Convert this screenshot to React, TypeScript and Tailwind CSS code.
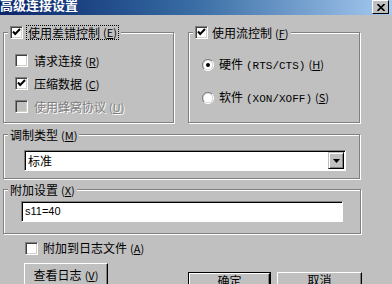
import React from "react";

const FONT = { fontFamily: '"Noto Sans CJK SC", "Liberation Sans", sans-serif' };

function Key({ k }: { k: string }) {
  return (
    <span className="ml-[3px] text-[11px]">
      (<span className="underline">{k}</span>)
    </span>
  );
}

function CheckBox({ checked, disabled }: { checked?: boolean; disabled?: boolean }) {
  return (
    <span
      className={`relative inline-block h-[13px] w-[13px] shrink-0 border border-t-[#808080] border-l-[#808080] border-r-white border-b-white shadow-[inset_1px_1px_0_#404040,inset_-1px_-1px_0_#d4d0c8] ${
        disabled ? "bg-[#c0c0c0]" : "bg-white"
      }`}
    >
      {checked && (
        <svg viewBox="0 0 11 11" className="absolute left-0 top-0 h-[11px] w-[11px]">
          <path d="M2 4.5 L4.2 7 L9 2" fill="none" stroke="#000" strokeWidth="2" />
        </svg>
      )}
    </span>
  );
}

function Radio({ checked }: { checked?: boolean }) {
  return (
    <svg viewBox="0 0 12 12" className="h-[12px] w-[12px] shrink-0">
      <path d="M10 2 A5.5 5.5 0 0 0 2 10" fill="none" stroke="#808080" />
      <path d="M10 2 A5.5 5.5 0 0 1 2 10" fill="none" stroke="#fff" />
      <circle cx="6" cy="6" r="4.5" fill="#fff" />
      {checked && <circle cx="6" cy="6" r="2" fill="#000" />}
    </svg>
  );
}

function Group({
  legend,
  className,
  children,
}: {
  legend: React.ReactNode;
  className: string;
  children?: React.ReactNode;
}) {
  return (
    <div
      className={`relative border border-[#808080] shadow-[inset_1px_1px_0_#fff,1px_1px_0_#fff] ${className}`}
    >
      <div className="absolute -top-[8px] left-[4px] flex h-[15px] items-center bg-[#c0c0c0] px-[2px]">
        {legend}
      </div>
      {children}
    </div>
  );
}

function Btn({
  children,
  className,
  def,
  top,
}: {
  children: React.ReactNode;
  className: string;
  def?: boolean;
  top?: boolean;
}) {
  return (
    <div className={`${def ? "border border-black" : ""} ${className}`}>
      <div
        className={`flex h-full w-full justify-center border border-t-white border-l-white border-r-black border-b-black shadow-[inset_-1px_-1px_0_#808080] text-[12px] ${
          top ? "items-start leading-[14px]" : "items-center"
        }`}
      >
        {children}
      </div>
    </div>
  );
}

export default function App() {
  return (
    <div
      className="h-[284px] w-[392px] overflow-hidden bg-[#c0c0c0] text-black"
      style={FONT}
    >
      {/* title bar */}
      <div className="flex h-[15px] items-start justify-between overflow-hidden bg-gradient-to-r from-[#0a246a] via-[#3a6ea5] to-[#a6caf0]">
        <span className="-mt-[4px] text-[13px] font-bold leading-[17px] text-white">高级连接设置</span>
        <div className="mr-[3px] flex h-[14px] w-[17px] items-center justify-center border border-t-white border-l-white border-r-black border-b-black bg-[#c0c0c0]">
          <svg viewBox="0 0 8 7" className="h-[7px] w-[8px]">
            <path d="M0.5 0 L7.5 7 M7.5 0 L0.5 7" stroke="#000" strokeWidth="1.6" />
          </svg>
        </div>
      </div>

      {/* top groups */}
      <div className="mt-[17px] flex pl-[3px]">
        <Group
          className="h-[91px] w-[171px]"
          legend={
            <div className="flex items-center gap-[3px]">
              <CheckBox checked />
              <span className="flex h-[15px] items-center border border-dotted border-black px-[1px] text-[12px]">
                使用差错控制
                <Key k="E" />
              </span>
            </div>
          }
        >
          <div className="flex flex-col pl-[11px] pt-[16px] text-[12px]">
            <div className="flex h-[23px] items-center gap-[6px]">
              <CheckBox />
              <span>
                请求连接
                <Key k="R" />
              </span>
            </div>
            <div className="flex h-[23px] items-center gap-[6px]">
              <CheckBox checked />
              <span>
                压缩数据
                <Key k="C" />
              </span>
            </div>
            <div className="flex h-[23px] items-center gap-[6px]">
              <CheckBox disabled />
              <span className="text-[#808080] [text-shadow:1px_1px_0_#fff]">
                使用蜂窝协议
                <Key k="U" />
              </span>
            </div>
          </div>
        </Group>

        <Group
          className="ml-[14px] h-[91px] w-[172px]"
          legend={
            <div className="flex items-center gap-[4px]">
              <CheckBox checked />
              <span className="text-[12px]">
                使用流控制
                <Key k="F" />
              </span>
            </div>
          }
        >
          <div className="flex flex-col gap-[10px] pl-[13px] pt-[20px] text-[12px]">
            <div className="flex h-[23px] items-center gap-[5px]">
              <Radio checked />
              <span>
                硬件
                <span className="ml-[3px] text-[11px]" style={{ fontFamily: '"Liberation Mono", monospace' }}>
                  (RTS/CTS)
                </span>
                <Key k="H" />
              </span>
            </div>
            <div className="flex h-[23px] items-center gap-[5px]">
              <Radio />
              <span>
                软件
                <span className="ml-[3px] text-[11px]" style={{ fontFamily: '"Liberation Mono", monospace' }}>
                  (XON/XOFF)
                </span>
                <Key k="S" />
              </span>
            </div>
          </div>
        </Group>
      </div>

      {/* modulation */}
      <div className="mt-[11px] pl-[3px]">
        <Group
          className="h-[45px] w-[357px]"
          legend={
            <span className="text-[12px]">
              调制类型
              <Key k="M" />
            </span>
          }
        >
          <div className="pl-[20px] pt-[15px]">
            <div className="flex h-[21px] w-[322px] items-center border border-t-[#808080] border-l-[#808080] border-r-white border-b-white bg-white shadow-[inset_1px_1px_0_#000]">
              <span className="flex-1 pl-[3px] text-[12px]">标准</span>
              <div className="mr-[1px] flex h-[17px] w-[16px] items-center justify-center border border-t-[#c0c0c0] border-l-[#c0c0c0] border-r-black border-b-black bg-[#c0c0c0] shadow-[inset_1px_1px_0_#fff,inset_-1px_-1px_0_#808080]">
                <svg viewBox="0 0 7 4" className="h-[4px] w-[7px]">
                  <path d="M0 0 H7 L3.5 4 Z" fill="#000" />
                </svg>
              </div>
            </div>
          </div>
        </Group>
      </div>

      {/* extra settings */}
      <div className="mt-[10px] pl-[3px]">
        <Group
          className="h-[45px] w-[358px]"
          legend={
            <span className="text-[12px]">
              附加设置
              <Key k="X" />
            </span>
          }
        >
          <div className="pl-[17px] pt-[11px]">
            <div className="flex h-[21px] w-[322px] items-center border border-t-[#808080] border-l-[#808080] border-r-white border-b-white bg-white shadow-[inset_1px_1px_0_#000]">
              <span className="pl-[3px] text-[11px]" style={{ fontFamily: '"Liberation Sans", sans-serif' }}>
                s11=40
              </span>
            </div>
          </div>
        </Group>
      </div>

      {/* log checkbox */}
      <div className="mt-[5px] flex items-center gap-[5px] pl-[25px] text-[12px]">
        <CheckBox />
        <span>
          附加到日志文件
          <Key k="A" />
        </span>
      </div>

      {/* buttons */}
      <div className="mt-[6px] flex items-start pl-[24px]">
        <Btn className="h-[24px] w-[84px]">
          <span>
            查看日志
            <Key k="V" />
          </span>
        </Btn>
        <Btn def top className="ml-[80px] mt-[9px] h-[24px] w-[83px]">
          确定
        </Btn>
        <Btn top className="ml-[6px] mt-[9px] h-[24px] w-[85px]">
          取消
        </Btn>
      </div>
    </div>
  );
}
